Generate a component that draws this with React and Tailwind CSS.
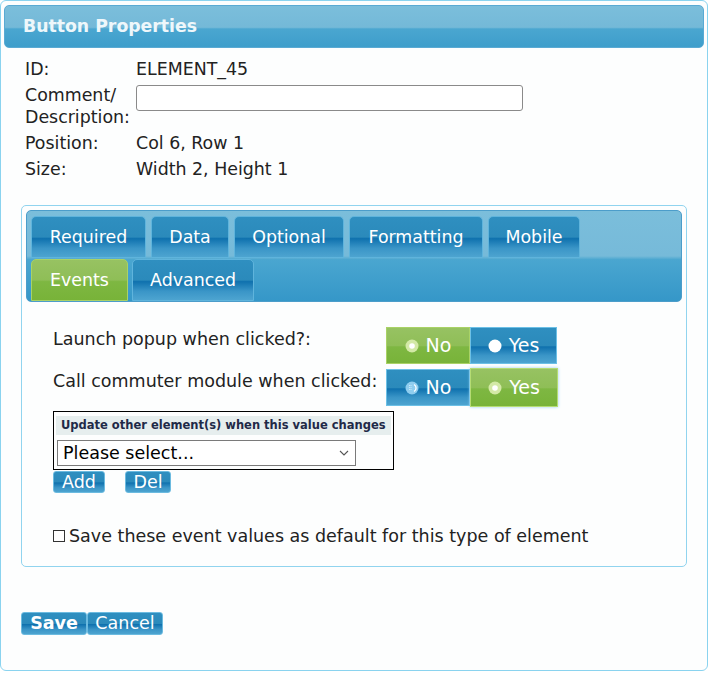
import React from 'react';

const BLUE = 'bg-[linear-gradient(to_bottom,#2f8fc0_0%,#2b8abb_50%,#0f71ae_54%,#3a95c7_78%,#4da4d0_100%)]';
const GREEN = 'bg-[linear-gradient(to_bottom,#97c262_0%,#8fbe57_50%,#7eb742_54%,#78b339_100%)]';

function Tab({ label, width, active }) {
    return (
        <div
            className={`h-[42px] ${width} flex items-center justify-center rounded-t-[5px] border text-[17.4px] text-white ${
                active ? `${GREEN} border-[#a9d266]` : `${BLUE} border-[#5fb4dc]`
            }`}
        >
            {label}
        </div>
    );
}

function Radio({ kind }) {
    if (kind === 'on') {
        return (
            <svg width="14" height="14" viewBox="0 0 14 14">
                <circle cx="7" cy="7" r="6.5" fill="#d3e9a6" />
                <circle cx="7" cy="7" r="2.8" fill="#ffffff" />
            </svg>
        );
    }
    if (kind === 'hover') {
        return (
            <svg width="14" height="14" viewBox="0 0 14 14">
                <circle cx="7" cy="7" r="6.5" fill="#8fcdef" />
                <path d="M9 3.5 A4 4 0 0 1 9 10.5" stroke="#ffffff" strokeWidth="1.3" fill="none" />
                <path d="M4.5 4 V10 M6 4 V10" stroke="#d8f0fb" strokeWidth="0.8" strokeDasharray="1 1" />
            </svg>
        );
    }
    return (
        <svg width="14" height="14" viewBox="0 0 14 14">
            <circle cx="7" cy="7" r="6.5" fill="#ffffff" />
        </svg>
    );
}

function Toggle({ value, hoverNo }) {
    const noOn = value === 'no';
    return (
        <div className="flex">
            <div
                className={`h-[37px] w-[84px] flex items-center justify-center gap-[7px] border text-[19px] text-white ${
                    noOn ? `${GREEN} border-[#a9d266]` : `${BLUE} border-[#6cc0e6]`
                }`}
            >
                <Radio kind={noOn ? 'on' : hoverNo ? 'hover' : 'off'} />
                No
            </div>
            <div
                className={`flex items-center justify-center gap-[7px] border text-[19px] text-white ${
                    noOn
                        ? `h-[37px] w-[87px] ${BLUE} border-[#6cc0e6]`
                        : `h-[39px] w-[88px] -mt-px ${GREEN} border-[#b5dc73] shadow-[0_0_3px_#9bd0ee]`
                }`}
            >
                <Radio kind={noOn ? 'off' : 'on'} />
                Yes
            </div>
        </div>
    );
}

function SmallButton({ children, width, bold }) {
    return (
        <div
            className={`h-[22px] ${width} flex items-center justify-center rounded-[3px] border border-[#6cbbe0] text-[17.5px] text-white ${BLUE} ${
                bold ? 'font-bold' : ''
            }`}
        >
            {children}
        </div>
    );
}

export default function App() {
    return (
        <div className="w-[710px] h-[674px] bg-white overflow-hidden font-['DejaVu_Sans',sans-serif] text-[#222]">
            <div className="w-[708px] h-[671px] border border-[#8ad3ef] rounded-[6px] bg-[#fdfefe] px-[3px] pt-[4px]">
                {/* Header */}
                <div className="h-[43px] rounded-[5px] border border-[#5aaad3] bg-[linear-gradient(to_bottom,#7bbedb_0%,#74b9d8_52%,#4aa6d0_56%,#3e9ecb_100%)] flex items-center pl-[18px]">
                    <span className="text-[17.3px] font-bold text-[#eef7fb]">Button Properties</span>
                </div>

                {/* Info */}
                <div className="grid grid-cols-[111px_1fr] gap-y-[4px] pl-[21px] pt-[10px] text-[17.4px] leading-[22px]">
                    <div>ID:</div>
                    <div>ELEMENT_45</div>
                    <div>
                        Comment/
                        <br />
                        Description:
                    </div>
                    <div>
                        <div className="mt-[1px] h-[26px] w-[387px] rounded-[3px] border border-[#8a8a8a] bg-white" />
                    </div>
                    <div>Position:</div>
                    <div>Col 6, Row 1</div>
                    <div>Size:</div>
                    <div>Width 2, Height 1</div>
                </div>

                {/* Tab panel */}
                <div className="ml-[17px] mt-[25px] w-[666px] h-[362px] rounded-[5px] border border-[#91d4ef] p-[4px]">
                    <div className="h-[92px] rounded-[5px] border border-[#4c9dca] bg-[linear-gradient(to_bottom,#7bbedb_0%,#76bad9_50%,#4aa6d0_54%,#3597c8_100%)] px-[4px] pt-[5px] flex flex-col gap-[1px]">
                        <div className="flex gap-[5px]">
                            <Tab label="Required" width="w-[115px]" />
                            <Tab label="Data" width="w-[78px]" />
                            <Tab label="Optional" width="w-[110px]" />
                            <Tab label="Formatting" width="w-[134px]" />
                            <Tab label="Mobile" width="w-[92px]" />
                        </div>
                        <div className="flex gap-[4px]">
                            <Tab label="Events" width="w-[97px]" active />
                            <Tab label="Advanced" width="w-[122px]" />
                        </div>
                    </div>

                    <div className="pl-[27px] pt-[25px] text-[17.5px]">
                        <div className="flex">
                            <div className="w-[333px] pt-[1px] leading-[22px]">Launch popup when clicked?:</div>
                            <Toggle value="no" />
                        </div>
                        <div className="flex mt-[5px]">
                            <div className="w-[333px] pt-[1px] leading-[22px]">Call commuter module when clicked:</div>
                            <Toggle value="yes" hoverNo />
                        </div>

                        <div className="mt-[4px] w-[341px] h-[59px] border border-black px-[2px] pt-[4px]">
                            <div className="h-[19px] bg-[#e6eeee] flex items-center pl-[5px] text-[11.5px] font-bold text-[#1f2a48]">
                                Update other element(s) when this value changes
                            </div>
                            <div className="mt-[5px] ml-[1px] h-[26px] w-[299px] border border-[#7a7a7a] bg-white flex items-center justify-between pl-[5px] pr-[6px]">
                                <span className="text-[17.5px] text-black">Please select...</span>
                                <svg width="10" height="6" viewBox="0 0 10 6">
                                    <path d="M1 1 L5 5 L9 1" stroke="#555" strokeWidth="1.1" fill="none" />
                                </svg>
                            </div>
                        </div>

                        <div className="flex gap-[20px] mt-[1px]">
                            <SmallButton width="w-[52px]">Add</SmallButton>
                            <SmallButton width="w-[46px]">Del</SmallButton>
                        </div>

                        <div className="flex items-center mt-[32px]">
                            <div className="w-[12px] h-[12px] border border-[#333] bg-white mr-[4px]" />
                            <span className="leading-[22px]">Save these event values as default for this type of element</span>
                        </div>
                    </div>
                </div>

                {/* Footer buttons */}
                <div className="flex ml-[17px] mt-[45px]">
                    <SmallButton width="w-[66px] h-[23px]" bold>
                        Save
                    </SmallButton>
                    <SmallButton width="w-[76px] h-[23px]">Cancel</SmallButton>
                </div>
            </div>
        </div>
    );
}
